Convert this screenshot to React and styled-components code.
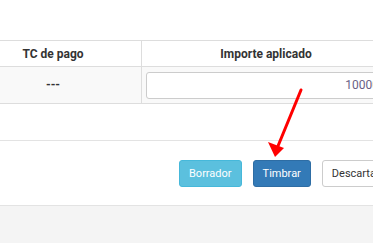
import React from 'react'
import styled, { createGlobalStyle } from 'styled-components'

const Global = createGlobalStyle`
  html, body {
    margin: 0;
    padding: 0;
    background: #f4f4f4;
    font-family: Roboto, "Liberation Sans", Arial, sans-serif;
    overflow: hidden;
  }
`

const Page = styled.div`
  position: relative;
  width: 373px;
  height: 243px;
  overflow: hidden;
`

const Panel = styled.div`
  background: #fff;
  padding-top: 40px;
  border-bottom: 1px solid #e3e3e3;
`

const Table = styled.div`
  margin-left: -35px;
  width: 470px;
  display: grid;
  grid-template-columns: 177px 249px 1fr;
  border-bottom: 1px solid #ddd;
`

const HeadCell = styled.div`
  height: 25px;
  display: flex;
  align-items: center;
  justify-content: center;
  border-top: 1px solid #ddd;
  border-bottom: 1px solid #ddd;
  border-right: 1px solid #ddd;
  font-size: 12px;
  font-weight: 700;
  color: #333;
`

const BodyCell = styled.div`
  height: 36px;
  display: flex;
  align-items: center;
  justify-content: ${p => (p.$fill ? 'stretch' : 'center')};
  padding: 0 ${p => (p.$fill ? '4px' : '0')};
  background: #f9f9f9;
  border-right: 1px solid #ddd;
  font-size: 12px;
  font-weight: 700;
  color: #333;
`

const Amount = styled.input`
  box-sizing: border-box;
  width: 100%;
  height: 27px;
  border: 1px solid #ccc;
  border-radius: 3px;
  background: #fff;
  text-align: right;
  padding: 0 6px;
  font-family: Roboto, "Liberation Sans", Arial, sans-serif;
  font-size: 12px;
  color: #6a5f85;
  outline: none;
`

const Spacer = styled.div`
  height: 36px;
  border-bottom: 1px solid #e3e3e3;
`

const Footer = styled.div`
  height: 64px;
  display: flex;
  align-items: center;
  padding-left: 179px;
  gap: 11px;
`

const Button = styled.button`
  box-sizing: border-box;
  height: 27px;
  padding: 0 9px;
  border-radius: 3px;
  font-family: Roboto, "Liberation Sans", Arial, sans-serif;
  font-size: 11px;
  white-space: nowrap;
  flex-shrink: 0;
  cursor: pointer;
  color: ${p => (p.$variant === 'default' ? '#333' : '#fff')};
  background: ${p =>
    p.$variant === 'info' ? '#5bc0de' : p.$variant === 'primary' ? '#337ab7' : '#fff'};
  border: 1px solid
    ${p => (p.$variant === 'info' ? '#46b8da' : p.$variant === 'primary' ? '#2e6da4' : '#ccc')};
`

const Arrow = styled.svg`
  position: absolute;
  left: 0;
  top: 0;
  pointer-events: none;
`

export default function App() {
  return (
    <Page>
      <Global />
      <Panel>
        <Table>
          <HeadCell>TC de pago</HeadCell>
          <HeadCell>Importe aplicado</HeadCell>
          <HeadCell />
          <BodyCell>---</BodyCell>
          <BodyCell $fill>
            <Amount defaultValue="10000" />
          </BodyCell>
          <BodyCell />
        </Table>
        <Spacer />
        <Footer>
          <Button $variant="info">Borrador</Button>
          <Button $variant="primary">Timbrar</Button>
          <Button $variant="default">Descartar</Button>
        </Footer>
      </Panel>
      <Arrow width="373" height="243" viewBox="0 0 373 243">
        <line x1="301" y1="90" x2="278" y2="146" stroke="#f00" strokeWidth="3" strokeLinecap="round" />
        <polygon points="275,157 268,142 284,148" fill="#f00" />
      </Arrow>
    </Page>
  )
}
